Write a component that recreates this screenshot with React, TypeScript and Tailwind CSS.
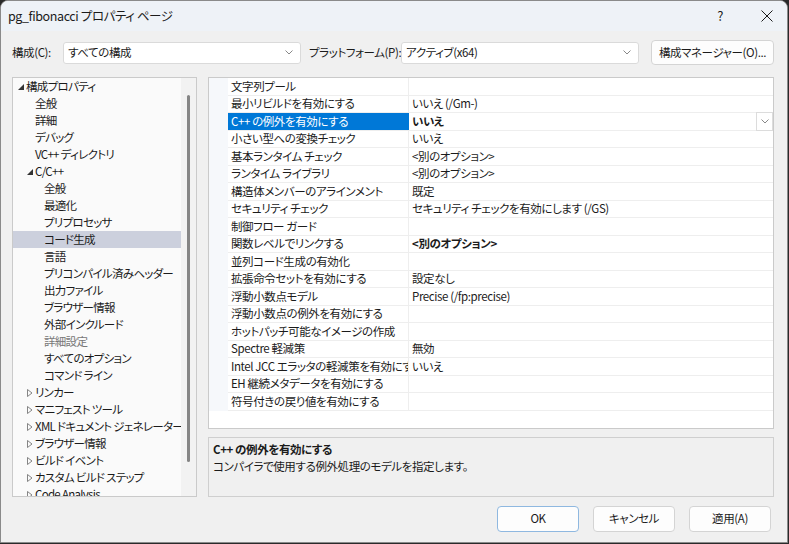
import React from "react";

const font =
  "font-['Noto_Sans_CJK_JP','Noto_Sans',sans-serif] [font-feature-settings:'palt']";

type TreeNode = {
  label: string;
  level: 0 | 1 | 2;
  exp?: "open" | "closed";
  selected?: boolean;
  dim?: boolean;
};

const tree: TreeNode[] = [
  { label: "構成プロパティ", level: 0, exp: "open" },
  { label: "全般", level: 1 },
  { label: "詳細", level: 1 },
  { label: "デバッグ", level: 1 },
  { label: "VC++ ディレクトリ", level: 1 },
  { label: "C/C++", level: 1, exp: "open" },
  { label: "全般", level: 2 },
  { label: "最適化", level: 2 },
  { label: "プリプロセッサ", level: 2 },
  { label: "コード生成", level: 2, selected: true },
  { label: "言語", level: 2 },
  { label: "プリコンパイル済みヘッダー", level: 2 },
  { label: "出力ファイル", level: 2 },
  { label: "ブラウザー情報", level: 2 },
  { label: "外部インクルード", level: 2 },
  { label: "詳細設定", level: 2, dim: true },
  { label: "すべてのオプション", level: 2 },
  { label: "コマンド ライン", level: 2 },
  { label: "リンカー", level: 1, exp: "closed" },
  { label: "マニフェスト ツール", level: 1, exp: "closed" },
  { label: "XML ドキュメント ジェネレーター", level: 1, exp: "closed" },
  { label: "ブラウザー情報", level: 1, exp: "closed" },
  { label: "ビルド イベント", level: 1, exp: "closed" },
  { label: "カスタム ビルド ステップ", level: 1, exp: "closed" },
  { label: "Code Analysis", level: 1, exp: "closed" },
];

const indent = ["pl-[5px]", "pl-[14px]", "pl-[23px]"];

type Prop = { name: string; value: string; selected?: boolean; bold?: boolean };

const props: Prop[] = [
  { name: "文字列プール", value: "" },
  { name: "最小リビルドを有効にする", value: "いいえ (/Gm-)" },
  { name: "C++ の例外を有効にする", value: "いいえ", selected: true, bold: true },
  { name: "小さい型への変換チェック", value: "いいえ" },
  { name: "基本ランタイム チェック", value: "<別のオプション>" },
  { name: "ランタイム ライブラリ", value: "<別のオプション>" },
  { name: "構造体メンバーのアラインメント", value: "既定" },
  { name: "セキュリティ チェック", value: "セキュリティ チェックを有効にします (/GS)" },
  { name: "制御フロー ガード", value: "" },
  { name: "関数レベルでリンクする", value: "<別のオプション>", bold: true },
  { name: "並列コード生成の有効化", value: "" },
  { name: "拡張命令セットを有効にする", value: "設定なし" },
  { name: "浮動小数点モデル", value: "Precise (/fp:precise)" },
  { name: "浮動小数点の例外を有効にする", value: "" },
  { name: "ホットパッチ可能なイメージの作成", value: "" },
  { name: "Spectre 軽減策", value: "無効" },
  { name: "Intel JCC エラッタの軽減策を有効にする", value: "いいえ" },
  { name: "EH 継続メタデータを有効にする", value: "" },
  { name: "符号付きの戻り値を有効にする", value: "" },
];

function Chevron() {
  return (
    <svg width="8" height="5" viewBox="0 0 8 5">
      <path d="M0.5 0.5 L4 4 L7.5 0.5" fill="none" stroke="#7a7a7a" strokeWidth="0.9" />
    </svg>
  );
}

function Expander({ exp }: { exp?: "open" | "closed" }) {
  if (exp === "open")
    return (
      <svg width="6" height="6" viewBox="0 0 6 6">
        <path d="M6 0 L6 6 L0 6 Z" fill="#333" />
      </svg>
    );
  if (exp === "closed")
    return (
      <svg width="6" height="8" viewBox="0 0 6 8">
        <path d="M0.5 0.5 L5 4 L0.5 7.5 Z" fill="none" stroke="#777" strokeWidth="0.9" />
      </svg>
    );
  return null;
}

function Combo({ text, width }: { text: string; width: string }) {
  return (
    <div
      className={`${width} shrink-0 h-[22px] bg-white border border-[#dadada] rounded-[3px] flex items-center justify-between pl-[4px] pr-[7px] whitespace-nowrap`}
    >
      <span>{text}</span>
      <Chevron />
    </div>
  );
}

export default function App() {
  return (
    <div
      className={`w-[789px] h-[544px] bg-[#2a2a2a] overflow-hidden ${font} text-[11.5px] tracking-[-0.4px] text-[#1b1b1b]`}
    >
      <div className="w-[788px] h-[543px] rounded-t-[8px] border border-[#8a8a8a] bg-[#f0f0f0] flex flex-col overflow-hidden">
        {/* title bar */}
        <div className="h-[30px] shrink-0 bg-[#eef2f7] flex items-center justify-between pl-[7px] pr-[14px]">
          <span className="text-[12.5px]">pg_fibonacci プロパティ ページ</span>
          <div className="flex items-center gap-[38px]">
            <span className="text-[13px]">?</span>
            <svg width="12" height="12" viewBox="0 0 12 12">
              <path d="M0.5 0.5 L11.5 11.5 M11.5 0.5 L0.5 11.5" stroke="#1b1b1b" strokeWidth="1" />
            </svg>
          </div>
        </div>

        {/* configuration row */}
        <div className="flex items-center h-[25px] mt-[9px] pl-[11px] whitespace-nowrap">
          <span className="w-[51px] shrink-0">構成(C):</span>
          <Combo text="すべての構成" width="w-[238px]" />
          <span className="w-[100px] shrink-0 pl-[8px]">プラットフォーム(P):</span>
          <Combo text="アクティブ(x64)" width="w-[238px]" />
          <button className="ml-[12px] shrink-0 w-[123px] h-[25px] bg-[#fdfdfd] border border-[#d4d4d4] rounded-[4px]">
            構成マネージャー(O)...
          </button>
        </div>

        {/* main */}
        <div className="flex mt-[12px] pl-[11px]">
          {/* tree */}
          <div className="w-[185px] h-[420px] shrink-0 border border-[#cacaca] bg-[#fafafa] flex overflow-hidden tracking-[-0.7px]">
            <div className="flex-1 flex flex-col overflow-hidden">
              {tree.map((n, i) => (
                <div
                  key={i}
                  className={`h-[17px] shrink-0 flex items-center whitespace-nowrap ${indent[n.level]} ${
                    n.selected ? "bg-[#ccd0dd]" : ""
                  } ${n.dim ? "text-[#777]" : ""}`}
                >
                  <span className="w-[8px] shrink-0 flex items-center">
                    <Expander exp={n.exp} />
                  </span>
                  <span>{n.label}</span>
                </div>
              ))}
            </div>
            <div className="w-[15px] shrink-0 bg-[#f2f2f2] flex justify-center pt-[17px]">
              <div className="w-[3px] h-[367px] rounded-full bg-[#858585]" />
            </div>
          </div>

          {/* right column */}
          <div className="ml-[11px] flex flex-col gap-[8px]">
            <div className="w-[566px] h-[352px] border border-[#cacaca] bg-white flex flex-col">
              {props.map((p, i) => (
                <div key={i} className="relative h-[17.5px] shrink-0 flex">
                  <div className="w-[19px] bg-[#f6f8fb]" />
                  <div
                    className={`w-[181px] pl-[3px] flex items-center overflow-hidden whitespace-nowrap border-b border-[#eeeeee] ${
                      p.selected ? "bg-[#0078d7] text-white border-[#0078d7]" : "border-r"
                    }`}
                  >
                    {p.name}
                  </div>
                  <div
                    className={`flex-1 pl-[3px] flex items-center whitespace-nowrap border-b border-[#eeeeee] ${
                      p.bold ? "font-bold" : ""
                    }`}
                  >
                    {p.value}
                  </div>
                  {p.selected && (
                    <div className="absolute right-0 top-[-1px] w-[17px] h-[19px] bg-white border border-[#dcdcdc] flex items-center justify-center">
                      <Chevron />
                    </div>
                  )}
                </div>
              ))}
            </div>
            <div className="w-[566px] h-[60px] border border-[#cfcfcf] bg-[#f0f0f0] pl-[4px] pt-[3px] leading-[17px]">
              <div className="font-bold">C++ の例外を有効にする</div>
              <div>コンパイラで使用する例外処理のモデルを指定します。</div>
            </div>
          </div>
        </div>

        {/* buttons */}
        <div className="flex mt-[9px] pl-[496px] gap-[14px]">
          <button className="w-[82px] h-[26px] bg-[#fdfdfd] border border-[#8fb8e0] rounded-[4px]">OK</button>
          <button className="w-[82px] h-[26px] bg-[#fdfdfd] border border-[#d4d4d4] rounded-[4px]">キャンセル</button>
          <button className="w-[82px] h-[26px] bg-[#fdfdfd] border border-[#d4d4d4] rounded-[4px]">適用(A)</button>
        </div>
      </div>
    </div>
  );
}
